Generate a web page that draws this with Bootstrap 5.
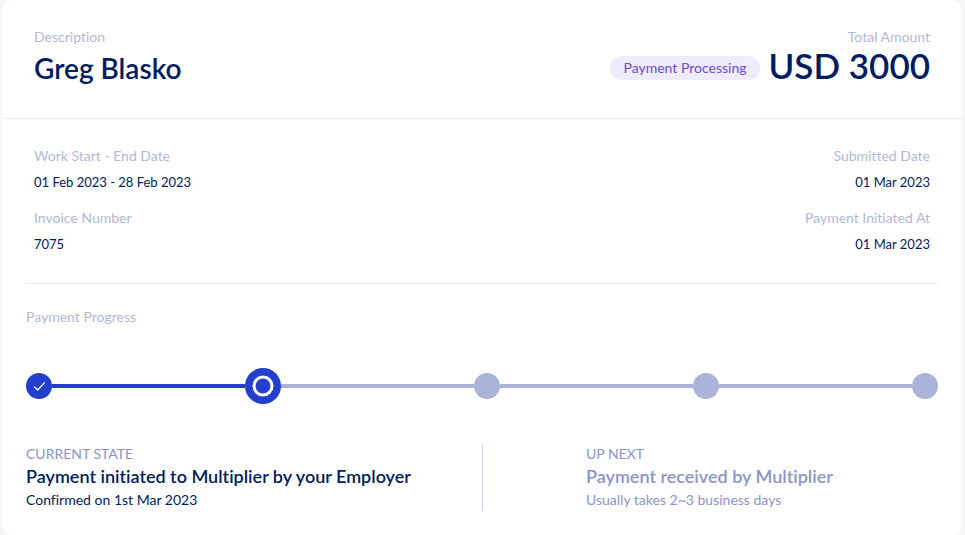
<!DOCTYPE html>
<html lang="en">
<head>
<meta charset="utf-8">
<meta name="viewport" content="width=device-width, initial-scale=1">
<title>Payment details</title>
<link href="https://cdn.jsdelivr.net/npm/bootstrap@5.3.0/dist/css/bootstrap.min.css" rel="stylesheet">
<style>
  body { background: #f5f6f8; color: #001c63; font-family: Lato, "Open Sans", sans-serif; font-size: 14px; line-height: 20px; font-variant-ligatures: none; }
  .pay-card { margin: 0 3px 0 2px; border-radius: 10px; min-height: 100vh; }
  .pay-head { padding: 27px 32px 30px; border-bottom: 1px solid #e6e9f9; }
  .soft { color: #b0b8de; font-weight: 400; }
  .payee { font-size: 28px; line-height: 40px; font-weight: 600; margin-top: 1px; }
  .total { font-size: 35px; line-height: 36px; font-weight: 600; }
  .pay-status { background: #eeebfc; color: #6f4bdc; padding: 2px 14px; margin-top: 6px; }
  .pay-body { padding: 27px 24px 24px; }
  .facts { padding: 0 8px 29px; row-gap: 16px; border-bottom: 1px solid #e6e9f9; }
  .facts dt { margin-bottom: 6px; }
  .facts dd { font-size: 13px; }
  .progress-label { margin: 23px 0 41px; font-size: 14px; line-height: 20px; }
  .step-dot { width: 26px; height: 26px; background: #abb3da; }
  .step-dot.done { background: #233fcf; }
  .step-dot.now { width: 36px; height: 36px; background: #233fcf; }
  .step-line { height: 4px; background: #abb3da; }
  .step-line.done { background: #233fcf; }
  .states { margin-top: 40px; }
  .state-next { border-left: 1px solid #cdd2ec; padding: 0 0 1px 103px; color: #8b94cc; }
  .state-tag { color: #8b94cc; }
  .state-title { font-size: 18px; line-height: 24px; font-weight: 600; margin-bottom: 2px; }
</style>
<script src="https://cdn.jsdelivr.net/npm/bootstrap@5.3.0/dist/js/bootstrap.bundle.min.js" defer></script>
</head>
<body>
<main class="pay-card bg-white">
  <header class="pay-head d-flex justify-content-between">
    <div>
      <div class="soft">Description</div>
      <h1 class="payee mb-0">Greg Blasko</h1>
    </div>
    <div class="text-end">
      <div class="soft">Total Amount</div>
      <div class="d-flex align-items-center justify-content-end gap-2">
        <span class="pay-status rounded-pill">Payment Processing</span>
        <span class="total">USD 3000</span>
      </div>
    </div>
  </header>
  <div class="pay-body">
    <dl class="facts row row-cols-2 gx-0 mb-0">
      <div><dt class="soft">Work Start - End Date</dt><dd class="mb-0">01 Feb 2023 - 28 Feb 2023</dd></div>
      <div class="text-end"><dt class="soft">Submitted Date</dt><dd class="mb-0">01 Mar 2023</dd></div>
      <div><dt class="soft">Invoice Number</dt><dd class="mb-0">7075</dd></div>
      <div class="text-end"><dt class="soft">Payment Initiated At</dt><dd class="mb-0">01 Mar 2023</dd></div>
    </dl>
    <h2 class="progress-label soft">Payment Progress</h2>
    <div class="d-flex align-items-center" role="img" aria-label="Step 2 of 5">
      <div class="step-dot done rounded-circle d-flex flex-shrink-0">
        <svg width="26" height="26" viewBox="0 0 26 26" fill="none" stroke="#fff" stroke-width="1.3"><path d="M8.2 13.6 11.6 17 18.8 9.4"/></svg>
      </div>
      <div class="step-line done flex-fill"></div>
      <div class="step-dot now rounded-circle d-flex flex-shrink-0">
        <svg width="36" height="36" viewBox="0 0 36 36" fill="none" stroke="#fff" stroke-width="3"><circle cx="18" cy="18" r="9"/></svg>
      </div>
      <div class="step-line flex-fill"></div>
      <div class="step-dot rounded-circle flex-shrink-0"></div>
      <div class="step-line flex-fill"></div>
      <div class="step-dot rounded-circle flex-shrink-0"></div>
      <div class="step-line flex-fill"></div>
      <div class="step-dot rounded-circle flex-shrink-0"></div>
    </div>
    <div class="states row gx-0">
      <section class="col-6">
        <div class="state-tag">CURRENT STATE</div>
        <h3 class="state-title">Payment initiated to Multiplier by your Employer</h3>
        <div>Confirmed on 1st Mar 2023</div>
      </section>
      <section class="state-next col-6">
        <div class="state-tag">UP NEXT</div>
        <h3 class="state-title">Payment received by Multiplier</h3>
        <div>Usually takes 2~3 business days</div>
      </section>
    </div>
  </div>
</main>
</body>
</html>
